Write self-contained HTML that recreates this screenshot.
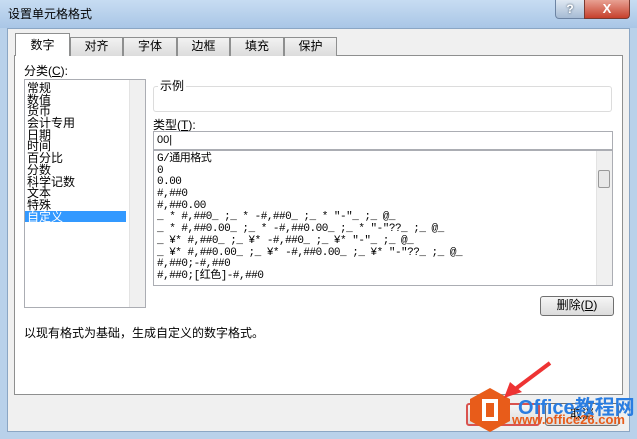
<!DOCTYPE html>
<html><head><meta charset="utf-8"><style>
*{box-sizing:border-box;margin:0;padding:0}
body{width:637px;height:439px;overflow:hidden;background:#b9d1ea;font-family:"Liberation Sans","Noto Sans CJK SC",sans-serif;font-size:12px;color:#000;position:relative}
.a{position:absolute}
.title{left:0;top:0;width:637px;height:28px;background:linear-gradient(#c7dcf2,#a9c6e6)}
.body{left:7px;top:28px;width:623px;height:404px;background:#f0f0f0;border:1px solid #8ba6c4}
.panel{left:14px;top:55px;width:609px;height:340px;background:#fff;border:1px solid #8e8f8f}
.tab{top:37px;height:19px;border:1px solid #8e8f8f;border-bottom:none;background:linear-gradient(#f2f2f2,#dcdcdc);text-align:center;line-height:17px;font-size:12px}
.box{border:1px solid #abadb3;background:#fff}
.list div{height:11.7px;line-height:12px;font-size:12px;padding-left:2px;white-space:nowrap}
.fmt div{height:11.7px;line-height:12px;font-size:11px;padding-left:3px;white-space:nowrap;font-family:"Liberation Mono","Noto Sans CJK SC",monospace;letter-spacing:-0.5px}
.sb{background:#f0f0f0;border-left:1px solid #e3e3e3}
.btn{border:1px solid #707070;border-radius:3px;background:linear-gradient(#f6f6f6,#dcdcdc);text-align:center;line-height:17px}
</style></head><body>
<div class="a title"></div>
<div class="a" style="left:8px;top:5px;font-size:12px">设置单元格格式</div>
<div class="a" style="left:555px;top:0;width:30px;height:19px;border:1px solid #6d84a3;border-top:none;border-radius:0 0 0 4px;background:linear-gradient(#dfe8f2,#a6bbd4);text-align:center;color:#fff;font-weight:bold;line-height:18px;text-shadow:0 0 2px #345">?</div>
<div class="a" style="left:584px;top:0;width:46px;height:19px;border:1px solid #7a3a30;border-top:none;border-radius:0 0 4px 0;background:linear-gradient(#e8a193,#c6402c);text-align:center;color:#fff;font-weight:bold;line-height:18px;font-size:13px">X</div>
<div class="a body"></div>
<div class="a panel"></div>
<div class="a tab" style="left:15px;top:33px;width:55px;height:23px;background:#fff;line-height:23px;z-index:2">数字</div>
<div class="a tab" style="left:70px;width:53px">对齐</div>
<div class="a tab" style="left:123px;width:54px">字体</div>
<div class="a tab" style="left:177px;width:53px">边框</div>
<div class="a tab" style="left:230px;width:54px">填充</div>
<div class="a tab" style="left:284px;width:53px">保护</div>
<div class="a" style="left:24px;top:62px">分类(<u>C</u>):</div>
<div class="a box list" style="left:24px;top:79px;width:122px;height:229px;padding-top:2px">
<div>常规</div><div>数值</div><div>货币</div><div>会计专用</div><div>日期</div><div>时间</div><div>百分比</div><div>分数</div><div>科学记数</div><div>文本</div><div>特殊</div><div style="background:#3399ff;color:#fff;width:101px">自定义</div>
</div>
<div class="a sb" style="left:129px;top:80px;width:16px;height:227px"></div>
<div class="a" style="left:153px;top:86px;width:459px;height:26px;border:1px solid #dcdcdc;border-radius:3px"></div>
<div class="a" style="left:158px;top:77px;background:#fff;padding:0 2px">示例</div>
<div class="a" style="left:153px;top:116px">类型(<u>T</u>):</div>
<div class="a box" style="left:153px;top:131px;width:460px;height:19px;padding:2px 3px;font-size:11px">00|</div>
<div class="a box fmt" style="left:153px;top:150px;width:460px;height:136px;padding-top:2px">
<div>G/通用格式</div><div>0</div><div>0.00</div><div>#,##0</div><div>#,##0.00</div>
<div>_ * #,##0_ ;_ * -#,##0_ ;_ * "-"_ ;_ @_</div>
<div>_ * #,##0.00_ ;_ * -#,##0.00_ ;_ * "-"??_ ;_ @_</div>
<div>_ ¥* #,##0_ ;_ ¥* -#,##0_ ;_ ¥* "-"_ ;_ @_</div>
<div>_ ¥* #,##0.00_ ;_ ¥* -#,##0.00_ ;_ ¥* "-"??_ ;_ @_</div>
<div>#,##0;-#,##0</div><div>#,##0;[红色]-#,##0</div>
</div>
<div class="a sb" style="left:596px;top:151px;width:16px;height:134px"></div>
<div class="a" style="left:598px;top:170px;width:12px;height:18px;border:1px solid #999;border-radius:2px;background:#e8e8e8"></div>
<div class="a btn" style="left:540px;top:296px;width:74px;height:20px">删除(<u>D</u>)</div>
<div class="a" style="left:24px;top:324px">以现有格式为基础，生成自定义的数字格式。</div>
<div class="a btn" style="left:466px;top:403px;width:74px;height:23px;border:2px solid #d9534f"></div>
<div class="a btn" style="left:545px;top:403px;width:74px;height:23px;line-height:21px">取消</div>
<div class="a" style="left:470px;top:388px;width:40px;height:44px;background:#e85c1a;clip-path:polygon(50% 0,100% 25%,100% 75%,50% 100%,0 75%,0 25%)"></div>
<div class="a" style="left:482px;top:399px;width:16px;height:22px;border:4px solid #fff"></div>
<div class="a" style="left:518px;top:391px;font-size:20px;font-weight:bold;color:#2a7de1">Office教程网</div>
<div class="a" style="left:512px;top:412px;font-size:13px;font-weight:bold;color:#e85c1a">www.office26.com</div>
<svg class="a" style="left:500px;top:360px" width="60" height="40"><path d="M50 3 L14 30" stroke="#e33" stroke-width="4"/><path d="M4 38 L10 22 L22 32 Z" fill="#e33"/></svg>
</body></html>
